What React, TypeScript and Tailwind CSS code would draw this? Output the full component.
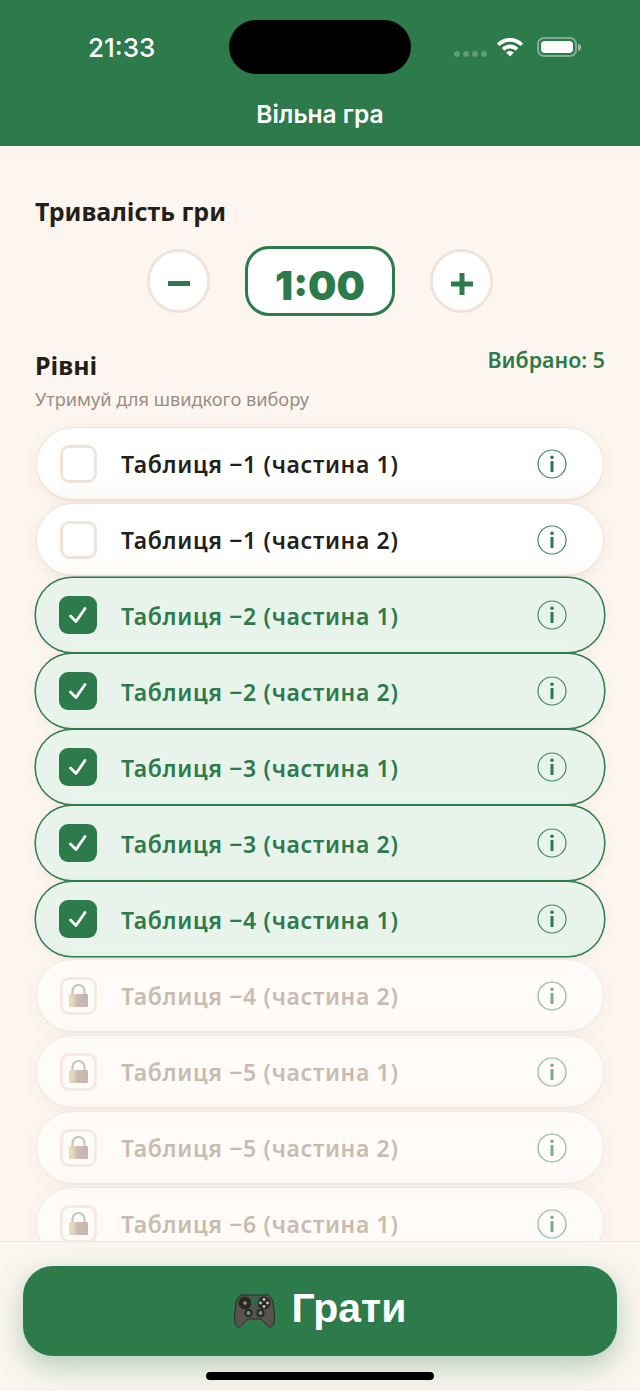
import React from 'react';

const GREEN = '#2d7a4a';

interface Level {
  label: string;
  state: 'off' | 'on' | 'locked';
}

const levels: Level[] = [
  { label: 'Таблиця −1 (частина 1)', state: 'off' },
  { label: 'Таблиця −1 (частина 2)', state: 'off' },
  { label: 'Таблиця −2 (частина 1)', state: 'on' },
  { label: 'Таблиця −2 (частина 2)', state: 'on' },
  { label: 'Таблиця −3 (частина 1)', state: 'on' },
  { label: 'Таблиця −3 (частина 2)', state: 'on' },
  { label: 'Таблиця −4 (частина 1)', state: 'on' },
  { label: 'Таблиця −4 (частина 2)', state: 'locked' },
  { label: 'Таблиця −5 (частина 1)', state: 'locked' },
  { label: 'Таблиця −5 (частина 2)', state: 'locked' },
  { label: 'Таблиця −6 (частина 1)', state: 'locked' },
];

const InfoIcon = () => (
  <svg width="30" height="30" viewBox="0 0 30 30" fill="none">
    <circle cx="15" cy="15" r="14" stroke="#3f8a5c" strokeWidth="1.2" />
    <circle cx="15" cy="8.300" r="1.800" fill={GREEN} />
    <rect x="13.500" y="12" width="3" height="11" fill={GREEN} />
  </svg>
);

const LockIcon = () => (
  <svg width="19" height="23" viewBox="0 0 19 23" fill="none">
    <defs>
      <linearGradient id="lock-body" x1="0" y1="0" x2="1" y2="0">
        <stop offset="0" stopColor="#dcd28f" />
        <stop offset="0.25" stopColor="#cdbd96" />
        <stop offset="0.45" stopColor="#a8938a" />
        <stop offset="1" stopColor="#a08a82" />
      </linearGradient>
    </defs>
    <path d="M3.500 11V7a6 6 0 0 1 12 0v4" stroke="#8fb3a0" strokeWidth="2.200" />
    <rect x="0" y="10" width="19" height="13" rx="1" fill="url(#lock-body)" />
  </svg>
);

const Gamepad = () => (
  <svg width="41" height="36" viewBox="0 0 41 36" fill="none">
    <path
      d="M9 2h23c4 0 6 3 7 8 1 6 2 15 1 20-1 4-4 5-6 3l-7-7H14l-7 7c-2 2-5 1-6-3C0 25 1 16 2 10 3 5 5 2 9 2Z"
      fill="#56524d"
      stroke="#2e2a28"
      strokeWidth="1"
    />
    <circle cx="11" cy="10" r="6.500" fill="#2a2725" />
    <circle cx="30" cy="10" r="6.500" fill="#2a2725" />
    <path d="M16 5h9l-2 8h-5Z" fill="#2f6a48" />
    <path d="M9 10h4M11 8v4" stroke="#8e8a85" strokeWidth="1.600" />
    <circle cx="30" cy="6.500" r="1.400" fill="#c9c6c1" />
    <circle cx="33.500" cy="10" r="1.400" fill="#c9c6c1" />
    <circle cx="26.500" cy="10" r="1.400" fill="#c9c6c1" />
    <circle cx="30" cy="13.500" r="1.400" fill="#c9c6c1" />
    <circle cx="14.500" cy="20" r="4" fill="#2a2725" />
    <circle cx="26.500" cy="20" r="4" fill="#2a2725" />
    <circle cx="14.500" cy="20" r="2" fill="#6d9a84" />
    <circle cx="26.500" cy="20" r="2" fill="#6d9a84" />
  </svg>
);

const Row = ({ label, state }: Level) => {
  if (state === 'on') {
    return (
      <div className="flex h-[76px] items-center rounded-[37px] border border-[#2d7a4a] bg-[#e8f3ec] pl-[23px] pr-[37px] shadow-[0_0_0_0.5px_#2d7a4a,0_3px_12px_rgba(150,110,70,0.1)]">
        <div className="flex h-[38px] w-[38px] items-center justify-center rounded-[9px] bg-[#2d7a4a]">
          <svg width="20" height="20" viewBox="0 0 20 20" fill="none">
            <path d="M2.500 11 8 16.500 17 3.500" stroke="#fff" strokeWidth="2.800" strokeLinecap="round" strokeLinejoin="round" />
          </svg>
        </div>
        <span className="ml-[24px] flex-1 pt-[2px] text-[23px] font-semibold tracking-[0.65px] text-[#2d7a4a]">{label}</span>
        <InfoIcon />
      </div>
    );
  }
  const locked = state === 'locked';
  return (
    <div className={`mx-px mt-[2px] flex h-[74px] items-center rounded-[37px] border border-b-2 border-[#f0e3d9] bg-gradient-to-b from-white from-70% to-[#fdfaf7] pl-[23px] pr-[36px] shadow-[0_3px_14px_rgba(150,110,70,0.1)] ${locked ? 'opacity-60' : ''}`}>
      <div className="flex h-[38px] w-[37px] items-center justify-center rounded-[9px] border-[3px] border-[#f0e3d9] bg-white">
        {locked && <LockIcon />}
      </div>
      <span className={`ml-[24px] flex-1 pt-[2px] text-[23px] font-semibold tracking-[0.65px] ${locked ? 'text-[#a89585]' : 'text-[#231f1a]'}`}>{label}</span>
      <InfoIcon />
    </div>
  );
};

const StepButton = ({ children }: { children: React.ReactNode }) => (
  <button className="flex h-[64px] w-[63px] items-center justify-center rounded-full border-[3px] border-[#f0e3d9] bg-white pt-[5px] text-[#2d7a4a]">
    {children}
  </button>
);

export default function App() {
  return (
    <div className="relative flex h-[1391px] w-[640px] flex-col overflow-hidden bg-[#fdf6f0] font-['Noto_Sans',sans-serif]">
      <header className="relative h-[146px] shrink-0 bg-[#2d7a4a] text-white">
        <div className="flex h-[94px] items-start">
          <span className="ml-[88px] mt-[31px] w-[68px] font-['Inter',sans-serif] text-[26px] font-medium leading-[34px]">21:33</span>
          <div className="ml-[73px] mt-[20px] h-[54px] w-[182px] rounded-[27px] bg-black" />
          <div className="ml-[43px] mt-[51px] flex gap-[3px]">
            <i className="h-[6px] w-[6px] rounded-full bg-white/25" />
            <i className="h-[6px] w-[6px] rounded-full bg-white/25" />
            <i className="h-[6px] w-[6px] rounded-full bg-white/25" />
            <i className="h-[6px] w-[6px] rounded-full bg-white/25" />
          </div>
          <svg className="ml-[9px] mt-[36px]" width="28" height="22" viewBox="0 0 28 22" fill="#fff">
            <path d="M14 2C8.800 2 4.300 4 1 7.400l2.600 2.700C6.300 7.400 10 5.800 14 5.800s7.700 1.600 10.400 4.300L27 7.400C23.700 4 19.200 2 14 2Z" />
            <path d="M14 8.600c-3.200 0-6.100 1.300-8.200 3.400l2.600 2.700c1.500-1.400 3.400-2.300 5.600-2.300s4.100.9 5.600 2.300l2.600-2.700c-2.100-2.100-5-3.400-8.200-3.400Z" />
            <path d="M14 15c-1.500 0-2.800.6-3.800 1.500L14 20.500l3.800-4c-1-.9-2.300-1.500-3.800-1.500Z" />
          </svg>
          <div className="ml-[13px] mt-[37px] flex items-center">
            <div className="h-[20px] w-[40px] rounded-[7px] border-2 border-white/40 p-[2px]">
              <div className="h-full w-full rounded-[4px] bg-white" />
            </div>
            <div className="ml-px h-[7px] w-[3px] rounded-r-full bg-white/50" />
          </div>
        </div>
        <h1 className="text-center font-['Inter',sans-serif] text-[24.500px] font-semibold leading-[40px]">Вільна гра</h1>
      </header>

      <main className="flex min-h-0 flex-1 flex-col overflow-hidden px-[35px]">
        <h2 className="mt-[48px] text-[25px] font-bold leading-[34px] text-[#231f1a]">Тривалість гри</h2>
        <div className="mt-[18px] flex items-center justify-center gap-[35px]">
          <StepButton>
            <span className="h-[5px] w-[22px] bg-[#2d7a4a]" />
          </StepButton>
          <div className="flex h-[70px] w-[150px] items-center justify-center rounded-[24px] border-[3px] border-[#2d7a4a] bg-white pt-[9px] font-['Inter',sans-serif] text-[40px] font-black text-[#2d7a4a]">
            1:00
          </div>
          <StepButton>
            <svg width="22" height="22" viewBox="0 0 22 22">
              <path d="M11 0v22M0 11h22" stroke={GREEN} strokeWidth="5" />
            </svg>
          </StepButton>
        </div>
        <div className="mt-[32px] flex items-start justify-between">
          <h2 className="text-[25px] font-bold leading-[34px] text-[#231f1a]">Рівні</h2>
          <span className="text-[21.400px] font-semibold leading-[24px] text-[#2d7a4a]">Вибрано: 5</span>
        </div>
        <p className="mt-[4px] text-[18.200px] leading-[26px] text-[#9a8d82]">Утримуй для швидкого вибору</p>
        <div className="mt-[13px] flex flex-col">
          {levels.map(level => (
            <Row key={level.label} {...level} />
          ))}
        </div>
      </main>

      <footer className="relative h-[150px] shrink-0 border-t border-[#f0e3d9] bg-[#fbf6f0] px-[23px] pt-[24px]">
        <button className="flex h-[90px] w-full items-center justify-center gap-[17px] rounded-[30px] bg-[#2d7a4a] text-[41px] font-bold text-white shadow-[0_10px_30px_rgba(45,122,74,0.35)]">
          <Gamepad />
          <span className="pb-[5px] font-['Liberation_Sans',sans-serif]">Грати</span>
        </button>
      </footer>
      <div className="absolute bottom-[11px] left-[206px] h-[8px] w-[228px] rounded-full bg-black" />
    </div>
  );
}
